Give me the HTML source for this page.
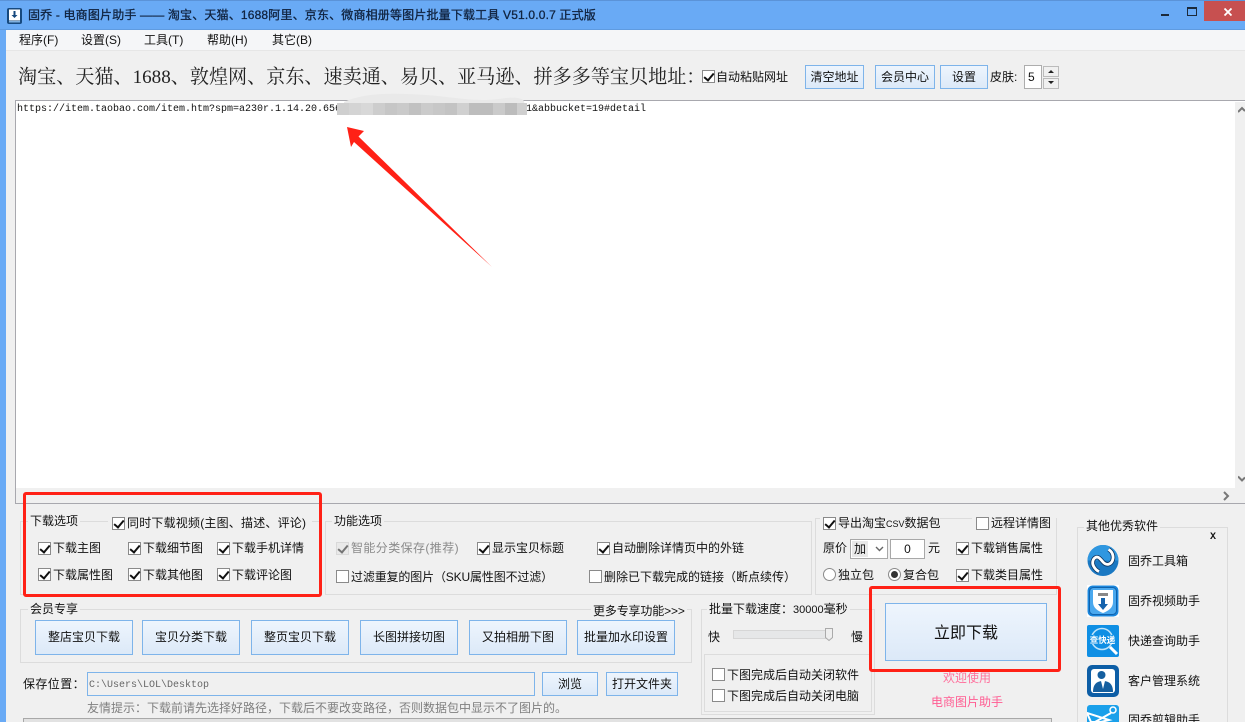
<!DOCTYPE html>
<html lang="zh"><head><meta charset="utf-8"><title>固乔</title>
<style>
html,body{margin:0;padding:0;width:1245px;height:722px;overflow:hidden;background:#f0f0f0}
body{position:relative;font:12px/16px "Liberation Sans","WenQuanYi Zen Hei","Noto Sans CJK SC",sans-serif;color:#111}
div,span.c{position:absolute;box-sizing:border-box}
.t{white-space:nowrap;height:16px}
.c{width:13px;height:13px;border:1px solid #8a8a8a;background:#fff;display:block}
.k::after{content:"";position:absolute;left:3px;top:0;width:4px;height:8px;border:solid #111;border-width:0 2px 2px 0;transform:rotate(40deg)}
.g{border:1px solid #dcdcdc}
.b{border:1px solid #7eb4ea;background:linear-gradient(#eef5fd,#dce9f8);text-align:center;white-space:nowrap}
.l{background:#f0f0f0;padding:0 2px}
.r{border:3px solid #ff2116;border-radius:3px}
</style></head><body>
<!-- frame -->
<div style="left:0;top:0;width:1245px;height:30px;background:#69aaf5;border-top:1px solid #5b93d8;border-bottom:1px solid #5f9be0"></div>
<div style="left:0;top:30px;width:6px;height:692px;background:#69aaf5"></div>
<div style="left:6px;top:30px;width:1239px;height:20px;background:#f5f6f8"></div>
<div style="left:6px;top:50px;width:1239px;height:1px;background:#e6e6e6"></div>
<svg style="position:absolute;left:7px;top:8px" width="15" height="16" viewBox="0 0 15 16"><rect width="15" height="16" rx="2" fill="#17497e"/><rect x="2" y="1.5" width="11" height="11" fill="#fff"/><path d="M6.5 3h2v4h2l-3 3-3-3h2z" fill="#17497e"/><rect x="2" y="13" width="11" height="1.5" fill="#7fb0df"/></svg>
<div class="t" style="left:28px;top:7px;font-family:'Liberation Sans','Noto Sans CJK SC',sans-serif;font-size:12px;color:#10233f;letter-spacing:.17px;-webkit-text-stroke:.3px #10233f">固乔 - 电商图片助手 —— 淘宝、天猫、1688阿里、京东、微商相册等图片批量下载工具 V51.0.0.7 正式版</div>
<div style="left:1161px;top:14px;width:8px;height:2px;background:#1c2a3a"></div>
<div style="left:1187px;top:7px;width:10px;height:9px;border:1px solid #1c2a3a;border-top-width:2px"></div>
<div style="left:1204px;top:1px;width:41px;height:20px;background:#c75050"></div>
<svg style="position:absolute;left:1224px;top:8px" width="8" height="8"><path d="M.5.5l7 7M7.500.5l-7 7" stroke="#fff" stroke-width="1.800"/></svg>
<div class="t" style="left:19px;top:32px">程序(F)</div>
<div class="t" style="left:81px;top:32px">设置(S)</div>
<div class="t" style="left:144px;top:32px">工具(T)</div>
<div class="t" style="left:207px;top:32px">帮助(H)</div>
<div class="t" style="left:272px;top:32px">其它(B)</div>
<!-- header row -->
<div class="t" style="left:18px;top:67px;height:22px;line-height:22px;font-size:19.1px;font-family:'Liberation Serif','Noto Serif CJK SC',serif;color:#222">淘宝、天猫、1688、敦煌网、京东、速卖通、易贝、亚马逊、拼多多等宝贝地址：</div>
<span class="c k" style="position:absolute;left:702px;top:70px"></span>
<div class="t" style="left:716px;top:69px">自动粘贴网址</div>
<div class="b" style="left:805px;top:65px;width:59px;height:24px;line-height:23px">清空地址</div>
<div class="b" style="left:875px;top:65px;width:60px;height:24px;line-height:23px">会员中心</div>
<div class="b" style="left:940px;top:65px;width:48px;height:24px;line-height:23px">设置</div>
<div class="t" style="left:990px;top:69px">皮肤:</div>
<div style="left:1024px;top:65px;width:18px;height:24px;background:#fff;border:1px solid #adadad;line-height:22px;padding-left:3px">5</div>
<div style="left:1043px;top:66px;width:16px;height:11px;border:1px solid #bbb;background:#f0f0f0"></div>
<div style="left:1043px;top:78px;width:16px;height:11px;border:1px solid #bbb;background:#f0f0f0"></div>
<svg style="position:absolute;left:1047px;top:69px" width="8" height="17"><path d="M4 1l3 3H1zM1 12h6l-3 3z" fill="#222"/></svg>
<!-- text area -->
<div style="left:15px;top:100px;width:1230px;height:404px;background:#fff;border:1px solid #a8a8ae;border-right:0"></div>
<div style="left:16px;top:488px;width:1229px;height:15px;background:#f0f0f0"></div>
<div style="left:1235px;top:102px;width:10px;height:386px;background:#f0f0f0"></div>
<svg style="position:absolute;left:1238px;top:106px" width="7" height="8"><path d="M0 6l4-4 3 3" fill="none" stroke="#777" stroke-width="2"/></svg>
<svg style="position:absolute;left:1238px;top:475px" width="7" height="8"><path d="M0 1.500l4 4 3-3" fill="none" stroke="#777" stroke-width="2"/></svg>
<svg style="position:absolute;left:1223px;top:491px" width="8" height="10"><path d="M1 1l4 4-4 4" fill="none" stroke="#777" stroke-width="2"/></svg>
<div class="t" style="left:17px;top:104px;font:10px/12px 'Liberation Mono',monospace;color:#111">https://item.taobao.com/item.htm?spm=a230r.1.14.20.656</div>
<div class="t" style="left:526px;top:104px;font:10px/12px 'Liberation Mono',monospace;color:#111">1&amp;abbucket=19#detail</div>
<svg style="position:absolute;left:336px;top:90px" width="196" height="28">
<path d="M8 12C30 2 60 3 90 5c30 2 50 8 80 3 10-1 20 0 18 6v0H8z" fill="#e9e9e9"/>
<g><rect x="1" y="13" width="12" height="12" fill="#cfcfcf"/><rect x="13" y="13" width="12" height="12" fill="#d4d4d4"/><rect x="25" y="13" width="12" height="12" fill="#d8d8d8"/><rect x="37" y="13" width="12" height="12" fill="#cdcdcd"/><rect x="49" y="13" width="12" height="12" fill="#c6c6c6"/><rect x="61" y="13" width="12" height="12" fill="#cacaca"/><rect x="73" y="13" width="12" height="12" fill="#c1c1c1"/><rect x="85" y="13" width="12" height="12" fill="#cbcbcb"/><rect x="97" y="13" width="12" height="12" fill="#c7c7c7"/><rect x="109" y="13" width="12" height="12" fill="#c3c3c3"/><rect x="121" y="13" width="12" height="12" fill="#d0d0d0"/><rect x="133" y="13" width="24" height="12" fill="#bdbdbd"/><rect x="157" y="13" width="12" height="12" fill="#cacaca"/><rect x="169" y="13" width="12" height="12" fill="#bcbcbc"/><rect x="181" y="13" width="10" height="12" fill="#cfcfcf"/></g>
</svg>
<svg style="position:absolute;left:340px;top:120px" width="160" height="155"><path d="M7 7L24 11 18.500 16.500 152 147 14 22 11 27z" fill="#ff2116"/></svg>
<!-- 下载选项 -->
<div class="g" style="left:20px;top:521px;width:300px;height:74px"></div>
<div class="t l" style="left:28px;top:513px">下载选项</div>
<div class="l" style="left:108px;top:513px;width:204px;height:16px"></div>
<span class="c k" style="position:absolute;left:112px;top:517px"></span><div class="t" style="left:127px;top:515px;letter-spacing:.2px">同时下载视频(主图、描述、评论)</div>
<span class="c k" style="position:absolute;left:38px;top:542px"></span><div class="t" style="left:53px;top:540px">下载主图</div>
<span class="c k" style="position:absolute;left:128px;top:542px"></span><div class="t" style="left:143px;top:540px">下载细节图</div>
<span class="c k" style="position:absolute;left:217px;top:542px"></span><div class="t" style="left:232px;top:540px">下载手机详情</div>
<span class="c k" style="position:absolute;left:38px;top:568px"></span><div class="t" style="left:53px;top:567px">下载属性图</div>
<span class="c k" style="position:absolute;left:128px;top:568px"></span><div class="t" style="left:143px;top:567px">下载其他图</div>
<span class="c k" style="position:absolute;left:217px;top:568px"></span><div class="t" style="left:232px;top:567px">下载评论图</div>
<!-- 功能选项 -->
<div class="g" style="left:325px;top:521px;width:487px;height:74px"></div>
<div class="t l" style="left:332px;top:513px">功能选项</div>
<span class="c k" style="position:absolute;left:336px;top:542px;background:#e4e4e4;border-color:#c8c8c8;opacity:.55"></span><div class="t" style="left:351px;top:540px;color:#8a8a8a;letter-spacing:.4px">智能分类保存(推荐)</div>
<span class="c k" style="position:absolute;left:477px;top:542px"></span><div class="t" style="left:492px;top:540px">显示宝贝标题</div>
<span class="c k" style="position:absolute;left:597px;top:542px"></span><div class="t" style="left:612px;top:540px">自动删除详情页中的外链</div>
<span class="c" style="position:absolute;left:336px;top:570px"></span><div class="t" style="left:351px;top:569px;letter-spacing:-.15px">过滤重复的图片（SKU属性图不过滤）</div>
<span class="c" style="position:absolute;left:589px;top:570px"></span><div class="t" style="left:604px;top:569px">删除已下载完成的链接（断点续传）</div>
<!-- CSV -->
<div class="g" style="left:815px;top:518px;width:242px;height:77px"></div>
<div class="l" style="left:820px;top:512px;width:120px;height:16px"></div>
<div class="l" style="left:972px;top:512px;width:84px;height:16px"></div>
<span class="c k" style="position:absolute;left:823px;top:517px"></span><div class="t" style="left:838px;top:515px">导出淘宝<span style="font-size:9px">CSV</span>数据包</div>
<span class="c" style="position:absolute;left:976px;top:517px"></span><div class="t" style="left:991px;top:515px">远程详情图</div>
<div class="t" style="left:823px;top:540px">原价</div>
<div style="left:850px;top:539px;width:38px;height:20px;background:#fff;border:1px solid #a8a8a8"></div>
<div style="left:852px;top:541px;width:16px;height:16px;background:#e8e8e8;line-height:16px;padding-left:2px">加</div>
<svg style="position:absolute;left:875px;top:546px" width="9" height="6"><path d="M1 1l3.500 3.500L8 1" fill="none" stroke="#666" stroke-width="1.400"/></svg>
<div style="left:890px;top:539px;width:35px;height:20px;background:#fff;border:1px solid #a8a8a8;text-align:center;line-height:18px">0</div>
<div class="t" style="left:928px;top:540px">元</div>
<span class="c k" style="position:absolute;left:956px;top:542px"></span><div class="t" style="left:971px;top:540px">下载销售属性</div>
<div style="left:823px;top:568px;width:13px;height:13px;border:1px solid #8a8a8a;border-radius:50%;background:#fff"></div><div class="t" style="left:838px;top:567px">独立包</div>
<div style="left:888px;top:568px;width:13px;height:13px;border:1px solid #8a8a8a;border-radius:50%;background:#fff"></div><div style="left:891px;top:571px;width:7px;height:7px;border-radius:50%;background:#333"></div><div class="t" style="left:903px;top:567px">复合包</div>
<span class="c k" style="position:absolute;left:956px;top:569px"></span><div class="t" style="left:971px;top:567px">下载类目属性</div>
<!-- 会员专享 -->
<div class="g" style="left:20px;top:609px;width:672px;height:54px"></div>
<div class="t l" style="left:28px;top:601px">会员专享</div>
<div class="t l" style="left:591px;top:603px;letter-spacing:-.15px">更多专享功能&gt;&gt;&gt;</div>
<div class="b" style="left:35px;top:620px;width:98px;height:35px;line-height:33px">整店宝贝下载</div>
<div class="b" style="left:142px;top:620px;width:98px;height:35px;line-height:33px">宝贝分类下载</div>
<div class="b" style="left:251px;top:620px;width:98px;height:35px;line-height:33px">整页宝贝下载</div>
<div class="b" style="left:360px;top:620px;width:98px;height:35px;line-height:33px">长图拼接切图</div>
<div class="b" style="left:469px;top:620px;width:98px;height:35px;line-height:33px">又拍相册下图</div>
<div class="b" style="left:577px;top:620px;width:98px;height:35px;line-height:33px">批量加水印设置</div>
<!-- save -->
<div class="t" style="left:23px;top:676px;letter-spacing:.4px">保存位置：</div>
<div style="left:87px;top:672px;width:448px;height:24px;background:#f0f0f0;border:1px solid #7eb4ea;font:10px/26px 'Liberation Mono',monospace;color:#666;padding-left:1px">C:\Users\LOL\Desktop</div>
<div class="b" style="left:542px;top:672px;width:56px;height:24px;line-height:23px">浏览</div>
<div class="b" style="left:606px;top:672px;width:72px;height:24px;line-height:23px">打开文件夹</div>
<div class="t" style="left:87px;top:700px;color:#7f7f7f">友情提示：下载前请先选择好路径，下载后不要改变路径，否则数据包中显示不了图片的。</div>
<div style="left:23px;top:718px;width:1029px;height:4px;background:#e2e2e2;border:1px solid #a8a8a8;border-bottom:0"></div>
<!-- speed -->
<div class="g" style="left:701px;top:609px;width:174px;height:106px"></div>
<div class="t l" style="left:707px;top:601px">批量下载速度：<span style="font-size:11px">30000</span>毫秒</div>
<div class="t" style="left:708px;top:629px">快</div>
<div style="left:733px;top:630px;width:99px;height:9px;background:#e6e7e8;border:1px solid #d6d6d6"></div>
<svg style="position:absolute;left:825px;top:628px" width="9" height="14"><path d="M.5.5h7v9l-3.500 3-3.500-3z" fill="#eee" stroke="#aaa"/></svg>
<div class="t" style="left:851px;top:629px">慢</div>
<div class="g" style="left:704px;top:654px;width:168px;height:58px"></div>
<span class="c" style="position:absolute;left:712px;top:668px"></span><div class="t" style="left:727px;top:667px">下图完成后自动关闭软件</div>
<span class="c" style="position:absolute;left:712px;top:689px"></span><div class="t" style="left:727px;top:688px">下图完成后自动关闭电脑</div>
<!-- big button -->
<div class="b" style="left:885px;top:603px;width:162px;height:58px;font-size:16px;line-height:60px">立即下载</div>
<div class="t" style="left:943px;top:670px;color:#ff6f9c">欢迎使用</div>
<div class="t" style="left:931px;top:694px;color:#ff5c92">电商图片助手</div>
<!-- red boxes -->
<div class="r" style="left:23px;top:492px;width:299px;height:105px"></div>
<div class="r" style="left:869px;top:586px;width:192px;height:86px"></div>
<!-- others -->
<div class="g" style="left:1077px;top:527px;width:151px;height:200px"></div>
<div class="t l" style="left:1084px;top:518px">其他优秀软件</div>
<div class="t" style="left:1210px;top:530px;font:bold 10px/16px 'Liberation Mono',monospace">X</div>
<svg style="position:absolute;left:1087px;top:545px" width="32" height="32" viewBox="0 0 32 32"><circle cx="16" cy="15.500" r="15.500" fill="#1a78c2"/><path d="M16 0a15.500 15.500 0 0 1 15.500 15.500H.5A15.500 15.500 0 0 1 16 0z" fill="#2f97e0"/><path d="M21.500 4.500c4 2 5.500 7 4 11-1.500 4-6 5.500-9.500 1.500-3-3.500-5-6-7.500-4.500-3 1.500-3.500 6-2 8.500 1 2 3 4.500 5.500 5.500" fill="none" stroke="#0f3560" stroke-width="4.400"/><path d="M21.500 4.500c4 2 5.500 7 4 11-1.500 4-6 5.500-9.500 1.500-3-3.500-5-6-7.500-4.500-3 1.500-3.500 6-2 8.500 1 2 3 4.500 5.500 5.500" fill="none" stroke="#fff" stroke-width="2.800"/></svg>
<svg style="position:absolute;left:1087px;top:585px" width="32" height="32" viewBox="0 0 32 32"><rect width="32" height="32" fill="#fff"/><rect x=".5" y=".5" width="31" height="31" rx="5" fill="#1a86dc"/><rect x="2.500" y="2.500" width="27" height="27" rx="4" fill="#4aa8ee" stroke="#0f62ad"/><path d="M6 5h20v12c0 6-5 9-10 11C11 26 6 23 6 17z" fill="#fff"/><rect x="11" y="8" width="10" height="3" fill="#888"/><path d="M14 13h4v6h3l-5 6-5-6h3z" fill="#1563ad"/></svg>
<svg style="position:absolute;left:1087px;top:625px" width="32" height="32" viewBox="0 0 32 32"><rect width="32" height="32" rx="2" fill="#0f8fe4"/><circle cx="15" cy="14" r="10.500" fill="none" stroke="#bfe3fa" stroke-width="1.500"/><path d="M23 22l7 7" stroke="#fff" stroke-width="3"/><rect x="1" y="10" width="29" height="9" rx="1" fill="#0f8fe4"/><text x="15.500" y="18" font-size="8.500" font-weight="700" fill="#fff" text-anchor="middle" font-family="'Noto Sans CJK SC',sans-serif">查快递</text></svg>
<svg style="position:absolute;left:1087px;top:665px" width="32" height="32" viewBox="0 0 32 32"><rect width="32" height="32" rx="5" fill="#0d5ea6"/><rect x="4" y="4" width="24" height="24" rx="3" fill="#fff"/><circle cx="14.500" cy="10" r="4" fill="#155f9f"/><path d="M6 27c0-8 4-11 10-11s10 3 10 11z" fill="#155f9f"/><path d="M14 16l2 8 2-8z" fill="#fff"/></svg>
<svg style="position:absolute;left:1087px;top:705px" width="32" height="17" viewBox="0 0 32 17"><rect width="32" height="20" rx="3" fill="#1aa0ea"/><path d="M0 8l22 7-8 2H4zM8 17l16-9" stroke="#fff" stroke-width="2" fill="none"/><circle cx="26" cy="5" r="3" fill="none" stroke="#fff" stroke-width="1.500"/></svg>
<div class="t" style="left:1128px;top:553px">固乔工具箱</div>
<div class="t" style="left:1128px;top:593px">固乔视频助手</div>
<div class="t" style="left:1128px;top:633px">快递查询助手</div>
<div class="t" style="left:1128px;top:673px">客户管理系统</div>
<div class="t" style="left:1128px;top:712px">固乔剪辑助手</div>
</body></html>
